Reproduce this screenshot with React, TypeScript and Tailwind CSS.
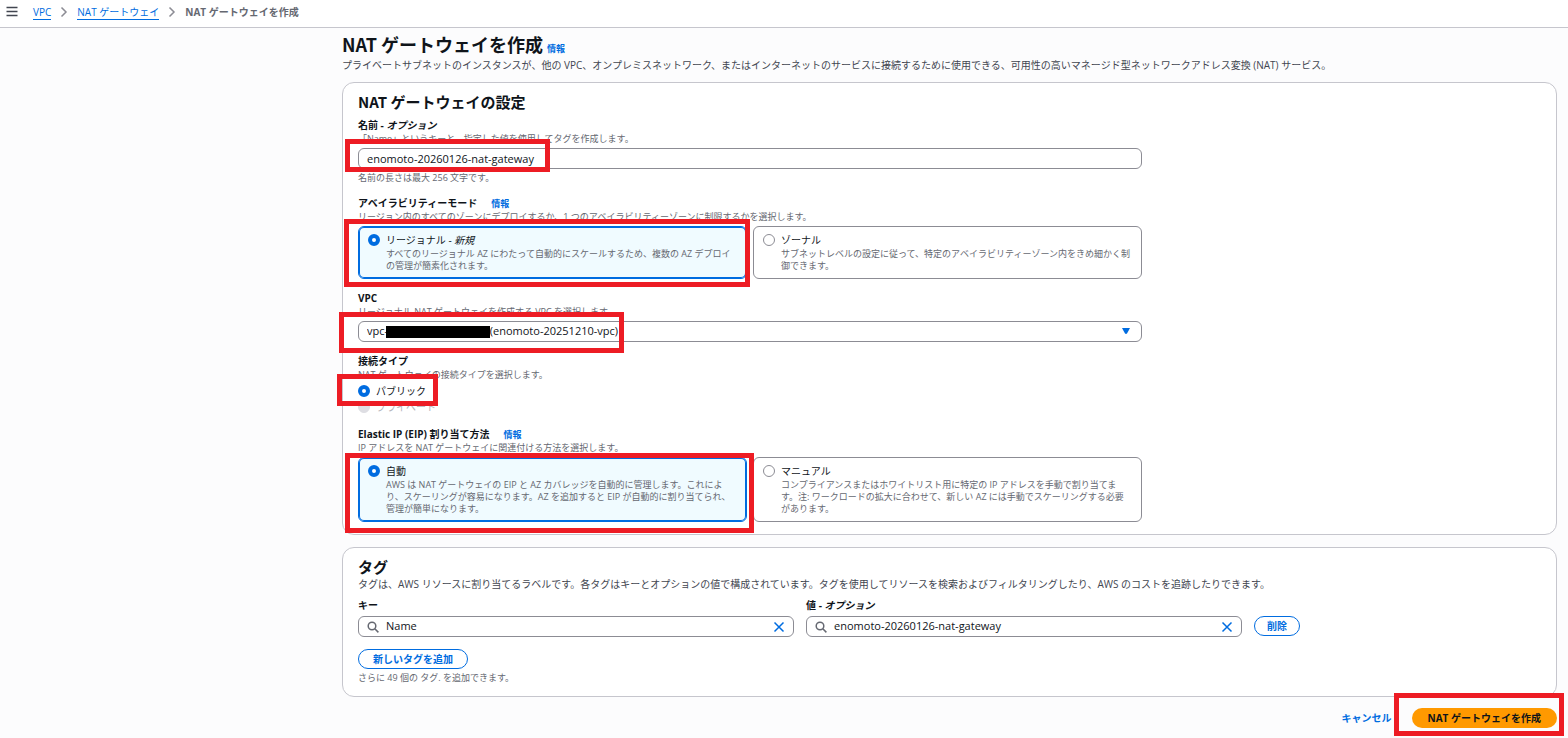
import React from 'react';

const InfoLink: React.FC = () => (
  <a href="#info" className="text-[9px] font-bold text-[#006ce0]">
    情報
  </a>
);

// Red frame that points out a step of the walkthrough
const Highlight: React.FC<{ className: string }> = ({ className }) => (
  <span aria-hidden="true" className={`pointer-events-none absolute z-10 border-5 border-[#ed1c24] ${className}`} />
);

const Chevron: React.FC = () => (
  <svg width="8" height="12" viewBox="0 0 8 12" fill="none" stroke="#8c8c94" strokeWidth="1.5" aria-hidden="true">
    <path d="M1.5 1.5 6 6l-4.5 4.5" />
  </svg>
);

interface TileProps {
  name: string;
  title: React.ReactNode;
  description: string;
  defaultChecked?: boolean;
}

const Tile: React.FC<TileProps> = ({ name, title, description, defaultChecked }) => (
  <label className="flex h-full gap-1.5 rounded-md border border-[#8c8c94] bg-white pt-[5px] pr-[9px] pb-1.5 pl-[9px] has-checked:border-[#006ce0] has-checked:bg-[#f0fbff] has-checked:inset-ring has-checked:inset-ring-[#006ce0]">
    <input
      type="radio"
      name={name}
      defaultChecked={defaultChecked}
      className="mt-0.5 size-3 shrink-0 appearance-none rounded-full border border-[#8c8c94] bg-white checked:border-4 checked:border-[#006ce0]"
    />
    <span className="min-w-0 flex-1">
      <span className="block leading-4">{title}</span>
      <span className="block text-[9px] leading-3 text-[#656871]">{description}</span>
    </span>
  </label>
);

interface SearchFieldProps {
  id: string;
  value: string;
}

const SearchField: React.FC<SearchFieldProps> = ({ id, value }) => (
  <div className="mt-[3px] flex h-[21px] items-center rounded-md border border-[#8c8c94] bg-white px-2">
    <svg width="12" height="12" viewBox="0 0 12 12" fill="none" stroke="#656871" strokeWidth="1.5" aria-hidden="true">
      <circle cx="5" cy="5" r="3.8" />
      <path d="m7.8 7.8 3.6 3.6" />
    </svg>
    <input id={id} type="text" defaultValue={value} className="ml-[7px] min-w-0 flex-1 bg-transparent text-[11px] outline-none" />
    <button type="button" aria-label="クリア" className="text-[#006ce0]">
      <svg width="12" height="12" viewBox="0 0 12 12" fill="none" stroke="currentColor" strokeWidth="1.5" aria-hidden="true">
        <path d="m1.5 1.5 9 9M10.5 1.5l-9 9" />
      </svg>
    </button>
  </div>
);

const cardClass = 'rounded-xl border border-[#c6c6cd] bg-white px-[15px] pt-[9px] pb-3';
const headingClass = "font-['Noto_Sans_CJK_JP',sans-serif] text-[15px] leading-5 font-bold";
const labelClass = 'block font-bold leading-4';
const hintClass = 'text-[9px] leading-3 text-[#656871]';
const fieldClass = 'block h-[21px] w-full appearance-none rounded-md border border-[#8c8c94] bg-white px-2 text-[11px]';
const radioClass = 'size-3 appearance-none rounded-full border border-[#8c8c94] checked:border-4 checked:border-[#006ce0] disabled:border-[#dedee3] disabled:bg-[#dedee3]';

const App: React.FC = () => {
  return (
    <div className="min-h-screen bg-[#fcfcfd] font-['Open_Sans','Noto_Sans_CJK_JP',sans-serif] text-[10px] text-[#0f141a]">
      <header className="flex h-7 items-center gap-[15px] border-b border-[#c6c6cd] bg-white px-1.5 pb-[3px]">
        <button type="button" aria-label="メニュー">
          <svg width="12" height="12" viewBox="0 0 12 12" stroke="#424650" strokeWidth="1.5" aria-hidden="true">
            <path d="M.5 1.5h11M.5 5.5h11M.5 9.5h11" />
          </svg>
        </button>
        <nav aria-label="パンくずリスト">
          <ol className="flex items-center gap-[9px] leading-[14px]">
            <li>
              <a href="#vpc" className="block border-b border-[#006ce0] text-[#006ce0]">VPC</a>
            </li>
            <li><Chevron /></li>
            <li>
              <a href="#nat" className="block border-b border-[#006ce0] text-[#006ce0]">NAT ゲートウェイ</a>
            </li>
            <li><Chevron /></li>
            <li className="font-bold text-[#656871]">NAT ゲートウェイを作成</li>
          </ol>
        </nav>
      </header>

      <main className="pt-1 pr-[11px] pl-[342px]">
        <div className="flex items-baseline gap-1">
          <h1 className="font-['Noto_Sans_CJK_JP',sans-serif] text-lg leading-6 font-bold">NAT ゲートウェイを作成</h1>
          <InfoLink />
        </div>
        <p className="mt-px leading-4 text-[#424650]">
          プライベートサブネットのインスタンスが、他の VPC、オンプレミスネットワーク、またはインターネットのサービスに接続するために使用できる、可用性の高いマネージド型ネットワークアドレス変換 (NAT) サービス。
        </p>

        <form className="mt-[9px]" onSubmit={(e) => e.preventDefault()}>
          <section className={cardClass}>
            <h2 className={headingClass}>NAT ゲートウェイの設定</h2>
            <div className="mt-[5px] flex max-w-[784px] flex-col gap-[11px]">
              <div>
                <label htmlFor="name" className={labelClass}>
                  名前 - <em>オプション</em>
                </label>
                <p className={hintClass}>「Name」というキーと、指定した値を使用してタグを作成します。</p>
                <div className="relative mt-[3px]">
                  <input id="name" type="text" defaultValue="enomoto-20260126-nat-gateway" className={fieldClass} />
                  <Highlight className="-top-[9px] -left-[13px] h-[33px] w-[205px]" />
                </div>
                <p className={`mt-[3px] ${hintClass}`}>名前の長さは最大 256 文字です。</p>
              </div>

              <div role="radiogroup" aria-labelledby="mode-label">
                <div className="flex items-baseline gap-3.5">
                  <span id="mode-label" className={labelClass}>アベイラビリティーモード</span>
                  <InfoLink />
                </div>
                <p className={hintClass}>リージョン内のすべてのゾーンにデプロイするか、1 つのアベイラビリティーゾーンに制限するかを選択します。</p>
                <div className="mt-[3px] grid grid-cols-2 gap-1.5">
                  <div className="relative">
                    <Tile
                      name="mode"
                      title={<>リージョナル - <em>新規</em></>}
                      description="すべてのリージョナル AZ にわたって自動的にスケールするため、複数の AZ デプロイの管理が簡素化されます。"
                      defaultChecked
                    />
                    <Highlight className="-top-[7px] -right-[3px] -bottom-2 -left-3.5" />
                  </div>
                  <Tile
                    name="mode"
                    title="ゾーナル"
                    description="サブネットレベルの設定に従って、特定のアベイラビリティーゾーン内をきめ細かく制御できます。"
                  />
                </div>
              </div>

              <div>
                <label htmlFor="vpc" className={labelClass}>VPC</label>
                <p className={hintClass}>リージョナル NAT ゲートウェイを作成する VPC を選択します。</p>
                <div className="relative mt-[3px]">
                  <select id="vpc" className={fieldClass}>
                    <option>{'vpc-' + '\u2003'.repeat(9) + '\u2005(enomoto-20251210-vpc)'}</option>
                  </select>
                  {/* the VPC id is blacked out */}
                  <span aria-hidden="true" className="absolute top-[5px] left-7 h-3 w-[104px] bg-black" />
                  <svg width="8" height="6" viewBox="0 0 8 6" fill="#006ce0" className="pointer-events-none absolute top-[7px] right-3" aria-hidden="true">
                    <path d="M0 0h8L5 5.5Q4 6.4 3 5.5Z" />
                  </svg>
                  <Highlight className="-top-[9px] -left-[19px] h-[41px] w-[285px]" />
                </div>
              </div>

              <div role="radiogroup" aria-labelledby="type-label">
                <span id="type-label" className={labelClass}>接続タイプ</span>
                <p className={hintClass}>NAT ゲートウェイの接続タイプを選択します。</p>
                <div className="relative mt-0.5 leading-4">
                  <label className="flex items-center gap-1.5">
                    <input type="radio" name="type" defaultChecked className={radioClass} />
                    パブリック
                  </label>
                  <label className="flex items-center gap-1.5 text-[#b4b4bb]">
                    <input type="radio" name="type" disabled className={radioClass} />
                    プライベート
                  </label>
                  <Highlight className="-top-[9px] -left-[21px] h-8 w-[101px]" />
                </div>
              </div>

              <div role="radiogroup" aria-labelledby="eip-label">
                <div className="flex items-baseline gap-3.5">
                  <span id="eip-label" className={labelClass}>Elastic IP (EIP) 割り当て方法</span>
                  <InfoLink />
                </div>
                <p className={hintClass}>IP アドレスを NAT ゲートウェイに関連付ける方法を選択します。</p>
                <div className="mt-[3px] grid grid-cols-2 gap-1.5">
                  <div className="relative">
                    <Tile
                      name="eip"
                      title="自動"
                      description="AWS は NAT ゲートウェイの EIP と AZ カバレッジを自動的に管理します。これにより、スケーリングが容易になります。AZ を追加すると EIP が自動的に割り当てられ、管理が簡単になります。"
                      defaultChecked
                    />
                    <Highlight className="-top-1 -right-[7px] -bottom-[11px] -left-[13px]" />
                  </div>
                  <Tile
                    name="eip"
                    title="マニュアル"
                    description="コンプライアンスまたはホワイトリスト用に特定の IP アドレスを手動で割り当てます。注: ワークロードの拡大に合わせて、新しい AZ には手動でスケーリングする必要があります。"
                  />
                </div>
              </div>
            </div>
          </section>

          <section className={`mt-3 ${cardClass}`}>
            <h2 className={headingClass}>タグ</h2>
            <p className="leading-[15px] text-[#424650]">
              タグは、AWS リソースに割り当てるラベルです。各タグはキーとオプションの値で構成されています。タグを使用してリソースを検索およびフィルタリングしたり、AWS のコストを追跡したりできます。
            </p>
            <div className="mt-[5px] grid grid-cols-[38fr_38fr_25fr] items-end gap-3">
              <div>
                <label htmlFor="tag-key" className={labelClass}>キー</label>
                <SearchField id="tag-key" value="Name" />
              </div>
              <div>
                <label htmlFor="tag-value" className={labelClass}>
                  値 - <em>オプション</em>
                </label>
                <SearchField id="tag-value" value="enomoto-20260126-nat-gateway" />
              </div>
              <div className="h-[21px]">
                <button type="button" className="block h-5 rounded-full border border-[#006ce0] bg-white px-3 font-bold text-[#006ce0]">
                  削除
                </button>
              </div>
            </div>
            <button type="button" className="mt-3 block h-5 rounded-full border border-[#006ce0] bg-white px-3.5 font-bold text-[#006ce0]">
              新しいタグを追加
            </button>
            <p className={`mt-[3px] ${hintClass}`}>さらに 49 個の タグ. を追加できます。</p>
          </section>

          <div className="mt-[11px] flex items-center justify-end gap-5 pb-2">
            <a href="#cancel" className="font-bold text-[#006ce0]">キャンセル</a>
            <div className="relative">
              <button type="submit" className="block h-5 rounded-full bg-[#ff9900] px-4 font-bold">
                NAT ゲートウェイを作成
              </button>
              <Highlight className="-top-[15px] -right-[7px] -bottom-2 -left-[18px]" />
            </div>
          </div>
        </form>
      </main>
    </div>
  );
};

export default App;
